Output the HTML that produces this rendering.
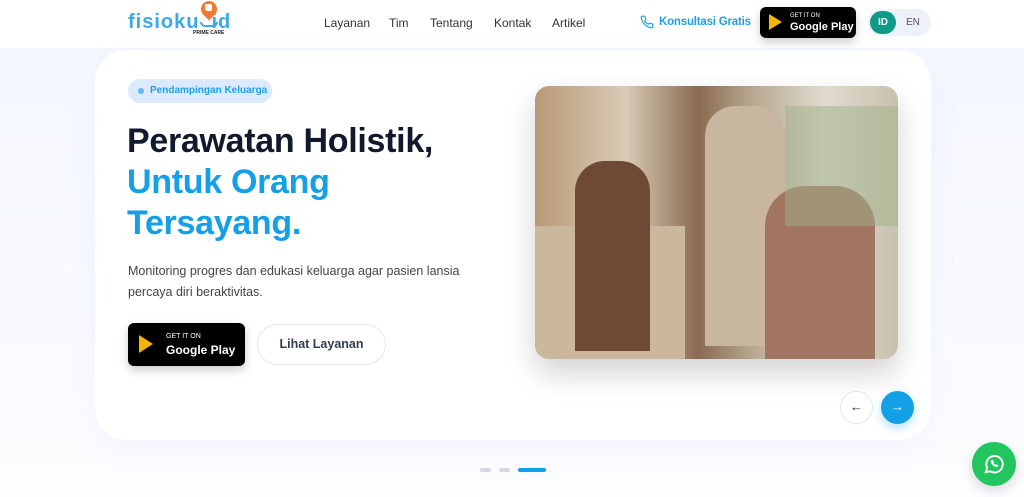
<!DOCTYPE html>
<html><head><meta charset="utf-8"><style>
*{margin:0;padding:0;box-sizing:border-box}
body{width:1024px;height:497px;overflow:hidden;font-family:"Liberation Sans",sans-serif;background:linear-gradient(180deg,#f3f6fd 0%,#f8faff 60%,#fdfdff 100%);position:relative}
.hdr{position:absolute;left:0;top:0;width:1024px;height:48px;background:#fff}
.logo{position:absolute;left:128px;top:11px;font-size:20px;font-weight:bold;color:#3aa8ea;letter-spacing:1px}
.pin{position:absolute;left:201px;top:1px;width:16px;height:16px;background:#f07a32;border-radius:50% 50% 50% 0;transform:rotate(-45deg)}
.pc{position:absolute;left:193px;top:30px;font-size:5px;font-weight:bold;color:#222}
.nav{position:absolute;top:16px;font-size:12px;color:#333}
.gp{position:absolute;background:#000;border-radius:6px;color:#fff;box-shadow:0 4px 10px rgba(0,0,0,.2)}
.gp .s{position:absolute;font-size:6px}
.gp .b{position:absolute;font-weight:bold}
.tri{position:absolute;width:0;height:0;border-top:9px solid transparent;border-bottom:9px solid transparent;border-left:14px solid #f5b400}
.card{position:absolute;left:95px;top:50px;width:836px;height:390px;background:#fff;border-radius:32px;box-shadow:0 10px 30px rgba(120,150,220,.08)}
</style></head><body>
<div class="hdr"></div>
<div class="card"></div>
<div class="logo">fisioku<span style="margin-left:12px">id</span></div>
<div class="pin"></div><div style="position:absolute;left:205px;top:4px;width:7px;height:7px;background:#fff;border-radius:2px"></div>
<div style="position:absolute;left:200px;top:22px;width:18px;height:5px;border:2px solid #3aa8ea;border-top:none;border-radius:0 0 9px 9px"></div>
<div class="pc">PRIME CARE</div>
<div class="nav" style="left:324px">Layanan</div>
<div class="nav" style="left:389px">Tim</div>
<div class="nav" style="left:430px">Tentang</div>
<div class="nav" style="left:494px">Kontak</div>
<div class="nav" style="left:552px">Artikel</div>
<svg style="position:absolute;left:640px;top:15px" width="14" height="14" viewBox="0 0 24 24" fill="none" stroke="#1fa0e6" stroke-width="2"><path d="M22 16.9v3a2 2 0 0 1-2.2 2 19.8 19.8 0 0 1-8.6-3.1 19.5 19.5 0 0 1-6-6A19.8 19.8 0 0 1 2.1 4.2 2 2 0 0 1 4.1 2h3a2 2 0 0 1 2 1.7c.1 1 .4 1.9.7 2.8a2 2 0 0 1-.5 2.1L8 9.9a16 16 0 0 0 6 6l1.3-1.3a2 2 0 0 1 2.1-.4c.9.3 1.8.6 2.8.7a2 2 0 0 1 1.7 2z"/></svg>
<div style="position:absolute;left:659px;top:16px;font-size:11.5px;font-weight:bold;color:#1fa0e6;letter-spacing:-0.2px">Konsultasi Gratis</div>
<div class="gp" style="left:760px;top:7px;width:96px;height:31px"><div class="tri" style="left:9px;top:7px;border-top-width:8px;border-bottom-width:8px;border-left-width:13px"></div><div class="s" style="left:30px;top:6px">GET IT ON</div><div class="b" style="left:30px;top:14px;font-size:11px">Google Play</div></div>
<div style="position:absolute;left:868px;top:9px;width:63px;height:27px;background:#eef2f8;border-radius:14px"></div>
<div style="position:absolute;left:870px;top:11px;width:26px;height:23px;background:#0e9a86;border-radius:12px;color:#fff;font-size:10px;font-weight:bold;text-align:center;line-height:23px">ID</div>
<div style="position:absolute;left:906px;top:17px;font-size:10px;color:#555">EN</div>
<div style="position:absolute;left:128px;top:79px;width:144px;height:24px;background:#dceafd;border-radius:12px;font-size:10px;font-weight:bold;color:#1fa0e6;line-height:24px;padding-left:22px">Pendampingan Keluarga</div>
<div style="position:absolute;left:138px;top:88px;width:6px;height:6px;border-radius:50%;background:#66b8ee"></div>
<div style="position:absolute;left:127px;top:121px;font-size:34px;font-weight:bold;line-height:41px;color:#111a2c;letter-spacing:-0.3px">Perawatan Holistik,<br><span style="color:#13a0e6">Untuk Orang<br>Tersayang.</span></div>
<div style="position:absolute;left:128px;top:261px;font-size:12.5px;line-height:21px;color:#444">Monitoring progres dan edukasi keluarga agar pasien lansia<br>percaya diri beraktivitas.</div>
<div class="gp" style="left:128px;top:323px;width:117px;height:43px"><div class="tri" style="left:11px;top:12px"></div><div class="s" style="left:38px;top:10px;font-size:7px">GET IT ON</div><div class="b" style="left:38px;top:20px;font-size:12px">Google Play</div></div>
<div style="position:absolute;left:257px;top:324px;width:129px;height:41px;border:1px solid #e3e6ec;border-radius:21px;font-size:12.5px;font-weight:bold;color:#333d4f;text-align:center;line-height:39px">Lihat Layanan</div>
<div style="position:absolute;left:535px;top:86px;width:363px;height:273px;border-radius:14px;overflow:hidden;box-shadow:0 14px 30px rgba(0,0,0,.18);background:linear-gradient(90deg,#b89a78 0%,#d9cbb5 25%,#8a6a50 45%,#b8a890 60%,#e0dccf 80%,#c9c0ad 100%)">
<div style="position:absolute;left:0;top:140px;width:150px;height:133px;background:#cbb89c"></div>
<div style="position:absolute;left:40px;top:75px;width:75px;height:190px;background:#6e4a34;border-radius:30px 30px 0 0"></div>
<div style="position:absolute;left:170px;top:20px;width:80px;height:240px;background:#c8b6a0;border-radius:30px 30px 0 0"></div>
<div style="position:absolute;left:230px;top:100px;width:110px;height:173px;background:#a27560;border-radius:40px 40px 0 0"></div>
<div style="position:absolute;left:250px;top:20px;width:113px;height:120px;background:#9fb28a;opacity:.5"></div>
</div>
<div style="position:absolute;left:840px;top:391px;width:33px;height:33px;border:1px solid #e3e6ec;border-radius:50%;background:#fff;text-align:center;line-height:30px;font-size:13px;color:#333">←</div>
<div style="position:absolute;left:881px;top:391px;width:33px;height:33px;border-radius:50%;background:#13a0e6;text-align:center;line-height:32px;font-size:13px;color:#fff;box-shadow:0 4px 10px rgba(19,160,230,.3)">→</div>
<div style="position:absolute;left:480px;top:468px;width:11px;height:4px;border-radius:2px;background:#d3d8e2"></div>
<div style="position:absolute;left:499px;top:468px;width:11px;height:4px;border-radius:2px;background:#d3d8e2"></div>
<div style="position:absolute;left:518px;top:468px;width:28px;height:4px;border-radius:2px;background:#13a0e6"></div>
<div style="position:absolute;left:972px;top:442px;width:44px;height:44px;border-radius:50%;background:#22c55e;box-shadow:0 4px 12px rgba(0,0,0,.15)"></div>
<svg style="position:absolute;left:983px;top:453px" width="22" height="22" viewBox="0 0 24 24" fill="none" stroke="#fff" stroke-width="2"><path d="M3 21l1.6-4.6A9 9 0 1 1 8 20z"/><path d="M9 8.5c0 3 2.5 6 6 6.5l1.2-1.3-2-1-1 .8c-1-.5-2-1.5-2.5-2.5l.8-1-1-2z" fill="#fff" stroke-width="1"/></svg>
</body></html>
